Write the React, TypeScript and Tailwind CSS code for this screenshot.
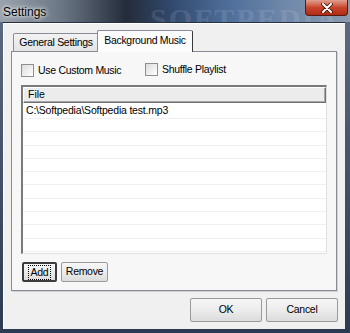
import React from 'react';

const ui = { fontFamily: '"Liberation Sans", Arial, sans-serif' };

function Checkbox({ label }: { label: string }) {
  return (
    <label className="flex items-center gap-[4px] text-[10.5px] tracking-[-0.3px] text-black">
      <span className="block w-[13px] h-[13px] border border-[#8e8f8f] bg-gradient-to-br from-[#dcdcdc] to-[#ffffff]" />
      <span>{label}</span>
    </label>
  );
}

function DlgButton({ children, w, isDefault }: { children: React.ReactNode; w: string; isDefault?: boolean }) {
  return (
    <button
      className={`${w} h-full text-[10.5px] tracking-[-0.3px] text-black flex items-center justify-center rounded-[2px] border ${
        isDefault ? 'border-[#3c3c3c] border-2' : 'border-[#9a9a9a]'
      } bg-gradient-to-b from-[#f6f6f6] via-[#ececec] to-[#dcdcdc]`}
    >
      {isDefault ? (
        <span className="px-[2px] border border-dotted border-black leading-[13px]">{children}</span>
      ) : (
        children
      )}
    </button>
  );
}

export default function App() {
  const rows = Array.from({ length: 11 });

  return (
    <div
      className="relative w-[350px] h-[333px] overflow-hidden bg-gradient-to-b from-[#5d6d84] to-[#2c3a52]"
      style={ui}
    >
      {/* title bar */}
      <div className="relative h-[22px] bg-[linear-gradient(90deg,#9aa3ad_0%,#6a7584_18%,#242c3a_36%,#30476a_48%,#4e6e9a_65%,#7088aa_82%,#8c9ab0_100%)]">
        <span className="absolute left-[3px] top-[3px] text-[12px] text-black [text-shadow:0_0_6px_#ffffff,0_0_3px_#ffffff]">
          Settings
        </span>
        <span className="absolute left-[150px] top-[-4px] text-[30px] font-bold tracking-[2px] text-white/10 font-['Liberation_Serif']">
          SOFTPEDIA
        </span>
        <div className="absolute right-[2px] top-0 w-[43px] h-[16px] rounded-b-[4px] border border-t-0 border-[#5a1a10] bg-gradient-to-b from-[#e0a090] via-[#c8452c] to-[#b02a14] flex items-center justify-center">
          <svg width="12" height="10" viewBox="0 0 12 10">
            <path d="M2 1 L10 9 M10 1 L2 9" stroke="#3a1008" strokeWidth="3.6" strokeLinecap="round" />
            <path d="M2 1 L10 9 M10 1 L2 9" stroke="#ffffff" strokeWidth="2" strokeLinecap="round" />
          </svg>
        </div>
      </div>

      {/* client area */}
      <div className="relative ml-[3px] w-[342px] h-[307px] bg-[#f0f0f0] border-t border-[#2a3240] shadow-[inset_1px_1px_0_#ffffff]">
        {/* tabs */}
        <div className="ml-[8px] mt-[7px] flex items-end h-[21px]">
          <div className="ml-[2px] h-[18px] w-[86px] flex items-center justify-center text-[10.5px] tracking-[-0.3px] text-black border border-b-0 border-[#898c95] rounded-t-[2px] bg-gradient-to-b from-[#f3f3f3] to-[#e3e3e3]">
            General Settings
          </div>
          <div className="relative z-[1] -mb-px h-[22px] -ml-[2px] w-[96px] flex items-start justify-center pt-[2px] text-[10.5px] tracking-[-0.3px] text-black border border-b-0 border-[#898c95] border-r-[#3a3a3a] rounded-t-[2px] bg-[#fcfcfc]">
            Background Music
          </div>
        </div>

        {/* tab panel */}
        <div className="ml-[8px] w-[326px] h-[240px] border border-[#898c95] bg-[#f7f7f7] pl-[9px] pt-[11px] shadow-[1px_1px_0_#d0d0d0]">
          <div className="flex h-[13px]">
            <div className="w-[124px]">
              <Checkbox label="Use Custom Music" />
            </div>
            <Checkbox label="Shuffle Playlist" />
          </div>

          {/* file list */}
          <div className="mt-[9px] w-[306px] h-[169px] border-t-2 border-l-2 border-b border-r border-t-[#7a7a7a] border-l-[#7a7a7a] border-b-[#e0e0e0] border-r-[#e0e0e0] bg-white overflow-hidden">
            <div className="h-[16px] flex items-center pl-[4px] text-[10.5px] text-black bg-[#ececec] border border-[#6f6f6f] border-l-[#ffffff] border-t-[#ffffff] shadow-[inset_-1px_-1px_0_#a8a8a8]">
              File
            </div>
            <div className="h-[16px] flex items-center pl-[3px] text-[10.5px] tracking-[-0.2px] text-black border-b border-[#f0f0f0]">
              C:\Softpedia\Softpedia test.mp3
            </div>
            {rows.map((_, i) => (
              <div key={i} className="h-[13.3px] border-b border-[#f0f0f0]" />
            ))}
          </div>

          {/* add / remove */}
          <div className="mt-[8px] ml-[1px] flex gap-[4px] h-[20px]">
            <DlgButton w="w-[35px]" isDefault>
              Add
            </DlgButton>
            <DlgButton w="w-[47px]">Remove</DlgButton>
          </div>
        </div>

        {/* ok / cancel */}
        <div className="mt-[7px] ml-[187px] flex gap-[4px] h-[24px]">
          <DlgButton w="w-[72px]">OK</DlgButton>
          <DlgButton w="w-[72px]">Cancel</DlgButton>
        </div>
      </div>
    </div>
  );
}
